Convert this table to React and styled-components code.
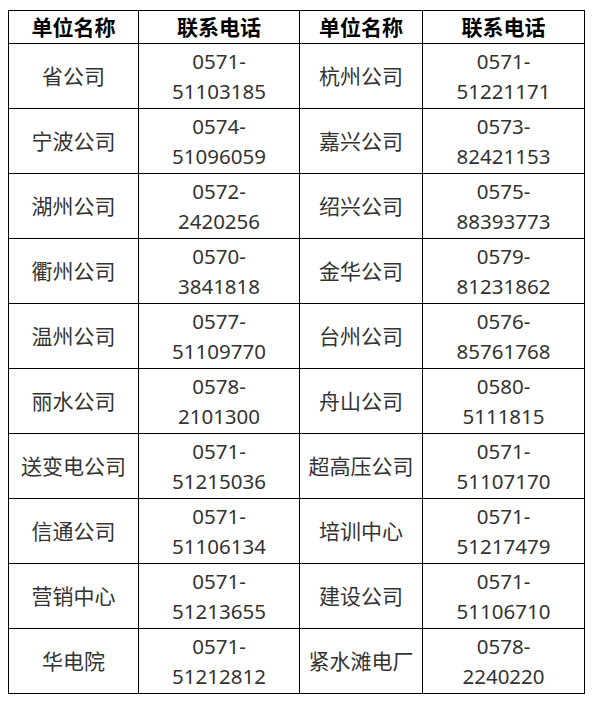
import React from 'react';
import styled, { createGlobalStyle } from 'styled-components';

const GlobalStyle = createGlobalStyle`
  body {
    margin: 0;
    background: #fff;
    font-family: "Noto Sans", "Noto Sans CJK SC", sans-serif;
  }
`;

const Page = styled.div`
  padding: 10px 0 0 8px;
`;

const Table = styled.table`
  border-collapse: collapse;
  table-layout: fixed;
  width: 576px;
`;

const HeadCell = styled.th`
  height: 32px;
  padding: 0;
  border: 1px solid #000;
  font-size: 21px;
  font-weight: 700;
  color: #000;
  text-align: center;
  vertical-align: middle;
  line-height: 30px;
`;

const Cell = styled.td`
  height: 64px;
  padding: 0;
  border: 1px solid #000;
  font-size: ${(p) => (p.$num ? '20.5px' : '21px')};
  color: #333;
  text-align: center;
  vertical-align: middle;
  line-height: 30px;
`;

const rows = [
  ['省公司', '0571-', '51103185', '杭州公司', '0571-', '51221171'],
  ['宁波公司', '0574-', '51096059', '嘉兴公司', '0573-', '82421153'],
  ['湖州公司', '0572-', '2420256', '绍兴公司', '0575-', '88393773'],
  ['衢州公司', '0570-', '3841818', '金华公司', '0579-', '81231862'],
  ['温州公司', '0577-', '51109770', '台州公司', '0576-', '85761768'],
  ['丽水公司', '0578-', '2101300', '舟山公司', '0580-', '5111815'],
  ['送变电公司', '0571-', '51215036', '超高压公司', '0571-', '51107170'],
  ['信通公司', '0571-', '51106134', '培训中心', '0571-', '51217479'],
  ['营销中心', '0571-', '51213655', '建设公司', '0571-', '51106710'],
  ['华电院', '0571-', '51212812', '紧水滩电厂', '0578-', '2240220'],
];

export default function App() {
  return (
    <Page>
      <GlobalStyle />
      <Table>
        <colgroup>
          <col style={{ width: 130 }} />
          <col style={{ width: 161 }} />
          <col style={{ width: 123 }} />
          <col style={{ width: 162 }} />
        </colgroup>
        <thead>
          <tr>
            <HeadCell>单位名称</HeadCell>
            <HeadCell>联系电话</HeadCell>
            <HeadCell>单位名称</HeadCell>
            <HeadCell>联系电话</HeadCell>
          </tr>
        </thead>
        <tbody>
          {rows.map((r) => (
            <tr key={r[0]}>
              <Cell>{r[0]}</Cell>
              <Cell $num>
                {r[1]}
                <br />
                {r[2]}
              </Cell>
              <Cell>{r[3]}</Cell>
              <Cell $num>
                {r[4]}
                <br />
                {r[5]}
              </Cell>
            </tr>
          ))}
        </tbody>
      </Table>
    </Page>
  );
}
